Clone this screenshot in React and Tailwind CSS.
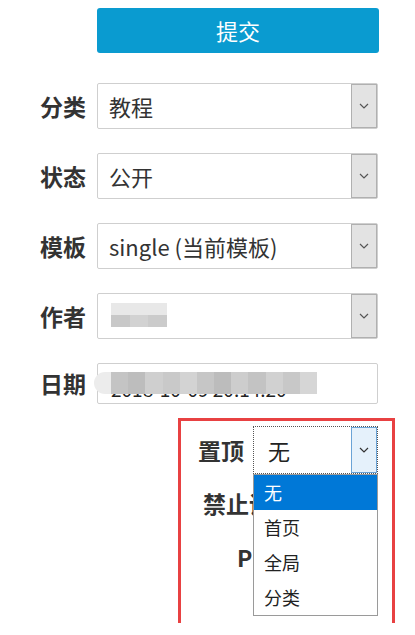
import React from "react";

const font = { fontFamily: '"Noto Sans CJK SC", "Noto Sans", sans-serif' };

function Chevron({ color = "#555" }) {
  return (
    <svg width="10" height="6" viewBox="0 0 10 6" fill="none">
      <polyline points="1,1 5,5 9,1" stroke={color} strokeWidth="1.2" />
    </svg>
  );
}

function Select({ value }) {
  return (
    <div className="flex h-full w-[281px] items-stretch rounded-[2px] border border-[#cfcfcf] bg-white">
      <div className="flex flex-1 items-center pl-[11px] text-[22px] text-[#333]">{value}</div>
      <div className="flex w-[26px] items-center justify-center border border-[#b0b0b0] bg-[#e3e3e3]">
        <Chevron />
      </div>
    </div>
  );
}

function Row({ label, children, h = "h-[46px]" }) {
  return (
    <div className={`flex items-center ${h}`}>
      <div className="w-[87px] pr-[1px] text-right text-[23px] font-bold text-[#333]">{label}</div>
      <div className="ml-[10px] h-full">{children}</div>
    </div>
  );
}

const dateBlocks = ["#c4c4c4", "#bdbdbd", "#cfcfcf", "#c9c9c9", "#d3d3d3", "#c6c6c6", "#bcbcbc", "#cdcdcd", "#c3c3c3", "#d1d1d1", "#c8c8c8", "#d6d6d6"];

export default function App() {
  return (
    <div className="relative h-[635px] w-[415px] overflow-hidden bg-white" style={font}>
      <div className="pt-[8px]">
        <button className="ml-[97px] flex h-[45px] w-[282px] items-center justify-center rounded-[3px] bg-[#0a9bd0] text-[22px] text-white">
          提交
        </button>
      </div>

      <div className="mt-[30px] flex flex-col gap-[24px]">
        <Row label="分类">
          <Select value="教程" />
        </Row>
        <Row label="状态">
          <Select value="公开" />
        </Row>
        <Row label="模板">
          <Select value="single (当前模板)" />
        </Row>
        <Row label="作者">
          <div className="relative h-full">
            <Select value="" />
            <div className="absolute left-[14px] top-[10px] flex h-[24px] w-[56px] flex-col">
              <div className="h-[12px] bg-[#e8e8e8]" />
              <div className="flex h-[12px]">
                <div className="flex-1 bg-[#c8c8c8]" />
                <div className="flex-1 bg-[#d2d2d2]" />
                <div className="flex-1 bg-[#cbcbcb]" />
              </div>
            </div>
          </div>
        </Row>
        <Row label="日期" h="h-[41px]">
          <div className="relative flex h-full w-[281px] items-center rounded-[2px] border border-[#cfcfcf] bg-white">
            <span className="pl-[13px] pt-[12px] text-[19px] text-[#222]">2018-10-09 20:14:20</span>
            <div className="absolute left-[13px] top-[8px] flex h-[22px] w-[206px]">
              {dateBlocks.map((c, i) => (
                <div key={i} className="flex-1" style={{ backgroundColor: c }} />
              ))}
            </div>
            <div className="absolute left-[-4px] top-[8px] h-[22px] w-[17px] rounded-l-full bg-[#ececec]" />
          </div>
        </Row>
      </div>

      <div className="ml-[178px] mt-[14px] h-[205px] w-[217px] border-x-[3px] border-t-[3px] border-[#e84142]">
        <div className="mt-[5px] flex h-[48px] items-center">
          <div className="w-[63px] text-right text-[23px] font-bold text-[#333]">置顶</div>
          <div className="relative ml-[9px] h-full w-[125px]">
            <div className="flex h-full items-stretch border border-dotted border-[#555] bg-white">
              <div className="flex flex-1 items-center pl-[14px] text-[22px] text-[#222]">无</div>
              <div className="flex w-[26px] items-center justify-center border border-[#6aa3d6] bg-[#e5f1fb]">
                <Chevron color="#333" />
              </div>
            </div>
            <div className="absolute left-0 top-full z-10 w-[125px] border border-[#9a9a9a] bg-white text-[18px] text-[#222]">
              <div className="flex h-[35px] items-center bg-[#0078d7] pl-[10px] text-white">无</div>
              <div className="flex h-[35px] items-center pl-[10px]">首页</div>
              <div className="flex h-[35px] items-center pl-[10px]">全局</div>
              <div className="flex h-[35px] items-center pl-[10px]">分类</div>
            </div>
          </div>
        </div>
        <div className="flex h-[58px] items-center whitespace-nowrap pl-[22px] text-[23px] font-bold text-[#333]">
          禁止评论
        </div>
        <div className="flex h-[50px] items-center whitespace-nowrap pl-[56px] text-[23px] font-bold text-[#333]">
          Ping
        </div>
      </div>
    </div>
  );
}
